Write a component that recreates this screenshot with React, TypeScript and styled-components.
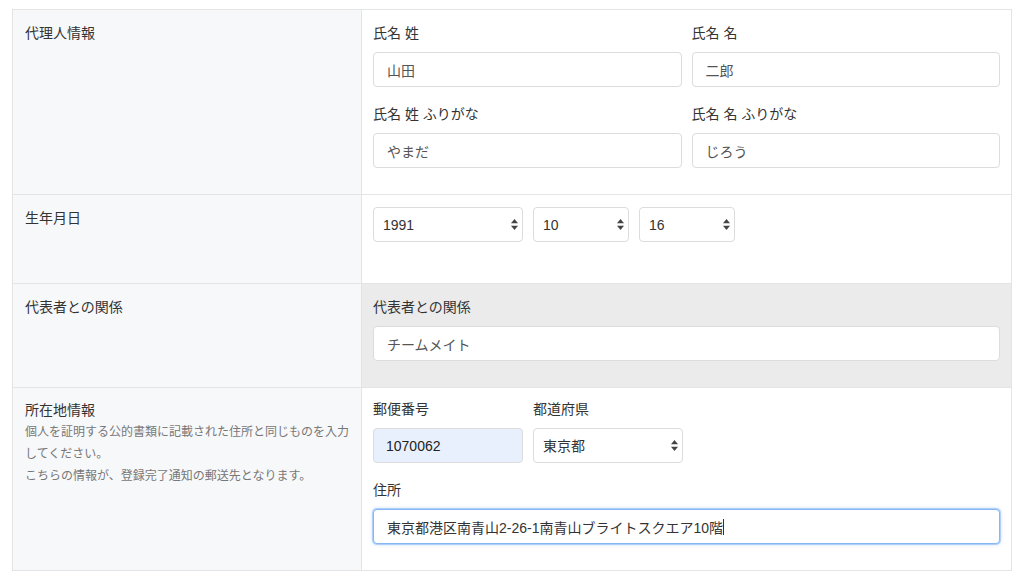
import React from 'react';
import styled, { createGlobalStyle, css } from 'styled-components';

const GlobalStyle = createGlobalStyle`
  html, body {
    margin: 0;
    padding: 0;
    background: #fff;
  }
  body {
    font-family: "Liberation Sans", "Noto Sans CJK JP", sans-serif;
    font-size: 14px;
    color: #333;
  }
  * {
    box-sizing: border-box;
  }
`;

const Table = styled.div`
  width: 1000px;
  margin: 9px 0 0 12px;
  border: 1px solid #e4e4e4;
`;

const Row = styled.div`
  display: grid;
  grid-template-columns: 349px 1fr;
  border-top: 1px solid #e4e4e4;

  &:first-child {
    border-top: none;
  }
`;

const HeadCell = styled.div<{ $top?: number }>`
  background: #f7f8fa;
  border-right: 1px solid #e4e4e4;
  padding: ${(p) => p.$top ?? 12}px 12px 10px;
`;

const Title = styled.div`
  line-height: 22px;
  color: #333;
`;

const Help = styled.p`
  margin: 0;
  font-size: 12px;
  line-height: 22px;
  color: #777;
`;

const BodyCell = styled.div<{ $muted?: boolean; $top?: number }>`
  background: ${(p) => (p.$muted ? '#ebebeb' : '#fff')};
  padding: ${(p) => p.$top ?? 12}px 11px 10px;
`;

const Columns = styled.div`
  display: grid;
  grid-template-columns: 1fr 1fr;
  column-gap: 10px;
`;

const Inline = styled.div`
  display: flex;
  gap: 10px;
`;

const FormGroup = styled.div<{ $space?: number; $width?: number }>`
  margin-bottom: ${(p) => p.$space ?? 16}px;
  ${(p) => p.$width && css`width: ${p.$width}px;`}
`;

const Label = styled.label`
  display: block;
  line-height: 22px;
  margin-bottom: 8px;
  color: #333;
`;

const TextInput = styled.input<{ $tone?: 'autofill' }>`
  display: block;
  width: 100%;
  height: 35px;
  padding: 0 13px;
  border: 1px solid #dcdcdc;
  border-radius: 4px;
  background: #fff;
  font-family: inherit;
  font-size: 14px;
  color: #555;
  outline: none;

  ${(p) =>
    p.$tone === 'autofill' &&
    css`
      background: #e8f0fe;
      color: #222;
      padding-left: 12px;
    `}
`;

const SelectWrap = styled.div<{ $width: number }>`
  position: relative;
  width: ${(p) => p.$width}px;
`;

const Select = styled.select`
  appearance: none;
  -webkit-appearance: none;
  display: block;
  width: 100%;
  height: 35px;
  padding: 0 24px 0 9px;
  border: 1px solid #dcdcdc;
  border-radius: 4px;
  background: #fff;
  font-family: inherit;
  font-size: 14px;
  color: #333;
  outline: none;
`;

const Arrows = styled.svg`
  position: absolute;
  right: 5px;
  top: 12px;
  pointer-events: none;
`;

const Caret = styled.span`
  display: inline-block;
  width: 1px;
  height: 16px;
  background: #333;
  vertical-align: middle;
`;

const FocusBox = styled.div`
  display: flex;
  align-items: center;
  height: 35px;
  padding: 0 13px;
  border: 1px solid #86b7f5;
  border-radius: 4px;
  background: #fff;
  color: #333;
  box-shadow: 0 0 0 1px rgba(134, 183, 245, 0.55), 0 0 4px rgba(134, 183, 245, 0.6);
`;

const SelectBox: React.FC<{ width: number; value: string }> = ({ width, value }) => (
  <SelectWrap $width={width}>
    <Select defaultValue={value}>
      <option value={value}>{value}</option>
    </Select>
    <Arrows width="7" height="11" viewBox="0 0 7 11">
      <path d="M3.5 0 L7 4.3 L0 4.3 Z" fill="#444" />
      <path d="M3.5 11 L7 6.7 L0 6.7 Z" fill="#444" />
    </Arrows>
  </SelectWrap>
);

const App: React.FC = () => (
  <>
    <GlobalStyle />
    <Table>
      <Row>
        <HeadCell>
          <Title>代理人情報</Title>
        </HeadCell>
        <BodyCell>
          <Columns>
            <FormGroup>
              <Label>氏名 姓</Label>
              <TextInput defaultValue="山田" />
            </FormGroup>
            <FormGroup>
              <Label>氏名 名</Label>
              <TextInput defaultValue="二郎" />
            </FormGroup>
            <FormGroup>
              <Label>氏名 姓 ふりがな</Label>
              <TextInput defaultValue="やまだ" />
            </FormGroup>
            <FormGroup>
              <Label>氏名 名 ふりがな</Label>
              <TextInput defaultValue="じろう" />
            </FormGroup>
          </Columns>
        </BodyCell>
      </Row>

      <Row>
        <HeadCell>
          <Title>生年月日</Title>
        </HeadCell>
        <BodyCell>
          <FormGroup $space={31}>
            <Inline>
              <SelectBox width={150} value="1991" />
              <SelectBox width={96} value="10" />
              <SelectBox width={96} value="16" />
            </Inline>
          </FormGroup>
        </BodyCell>
      </Row>

      <Row>
        <HeadCell>
          <Title>代表者との関係</Title>
        </HeadCell>
        <BodyCell $muted>
          <FormGroup>
            <Label>代表者との関係</Label>
            <TextInput defaultValue="チームメイト" />
          </FormGroup>
        </BodyCell>
      </Row>

      <Row>
        <HeadCell $top={11}>
          <Title>所在地情報</Title>
          <Help>個人を証明する公的書類に記載された住所と同じものを入力してください。</Help>
          <Help>こちらの情報が、登録完了通知の郵送先となります。</Help>
        </HeadCell>
        <BodyCell $top={10}>
          <Inline>
            <FormGroup $width={150}>
              <Label>郵便番号</Label>
              <TextInput $tone="autofill" defaultValue="1070062" />
            </FormGroup>
            <FormGroup $width={150}>
              <Label>都道府県</Label>
              <SelectBox width={150} value="東京都" />
            </FormGroup>
          </Inline>
          <FormGroup>
            <Label>住所</Label>
            <FocusBox>
              東京都港区南青山2-26-1南青山ブライトスクエア10階
              <Caret />
            </FocusBox>
          </FormGroup>
        </BodyCell>
      </Row>
    </Table>
  </>
);

export default App;
